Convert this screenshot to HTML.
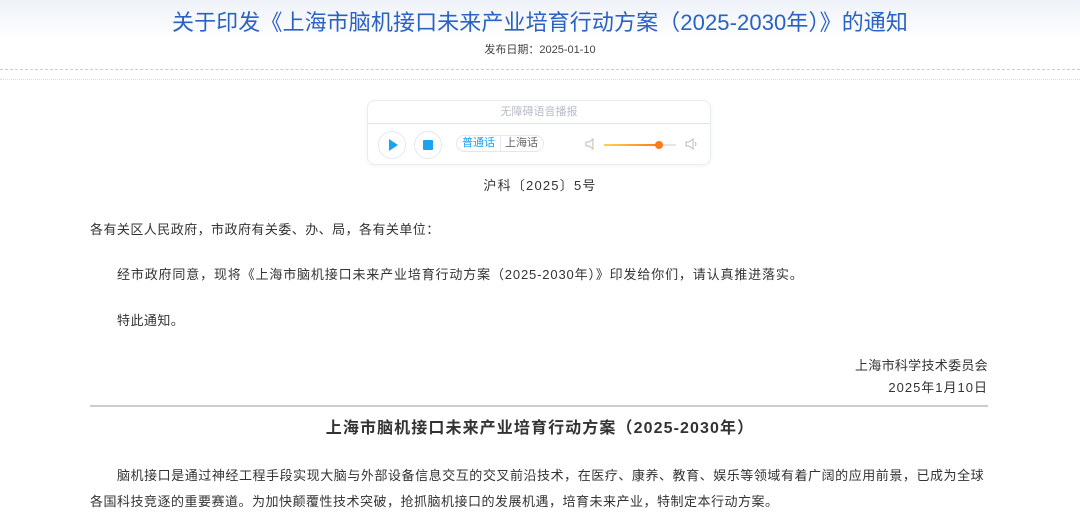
<!DOCTYPE html>
<html><head><meta charset="utf-8"><style>
*{margin:0;padding:0;box-sizing:border-box}
body{width:1080px;height:522px;overflow:hidden;background:#fff;font-family:"Liberation Sans","Noto Sans CJK SC",sans-serif;color:#333;position:relative}
.top{position:absolute;left:0;top:0;width:1080px;height:68px;background:linear-gradient(#eef2f8,#fff 60%)}
.t{position:absolute;left:0;width:1080px;text-align:center;top:8px;font-size:22px;color:#2a62c4;line-height:30px;letter-spacing:0.1px}
.d{position:absolute;left:0;width:1080px;text-align:center;top:41px;font-size:11px;color:#444}
.l1{position:absolute;left:0;width:1080px;top:69px;border-top:1px dashed #ccc}
.l2{position:absolute;left:0;width:1080px;top:79px;border-top:1px dotted #ddd}
.p{position:absolute;font-size:13px;line-height:18px;white-space:nowrap;letter-spacing:0.45px}
.box{position:absolute;left:367px;top:100px;width:344px;height:65px;border:1px solid #e8ecf3;border-radius:8px;box-shadow:0 1px 4px rgba(0,0,0,.05)}
.hd{height:23px;border-bottom:1px solid #dde6f3;text-align:center;font-size:11px;color:#b8bcc8;line-height:23px}
.c{position:absolute;width:28px;height:28px;border:1px solid #e3e8f0;border-radius:50%;top:30px}
.tog{position:absolute;left:88px;top:34px;width:88px;height:17px;border:1px solid #e3e8f0;border-radius:9px;font-size:11px;line-height:15px}
</style></head><body>
<div class="top"></div>
<div class="t">关于印发《上海市脑机接口未来产业培育行动方案（2025-2030年）》的通知</div>
<div class="d">发布日期：2025-01-10</div>
<div class="l1"></div><div class="l2"></div>
<div class="box"><div class="hd">无障碍语音播报</div>
<div class="c" style="left:10px"><svg width="28" height="28" style="position:absolute;left:-1px;top:-1px"><path d="M11 8 L20 14 L11 20Z" fill="#1aa3f0"/></svg></div>
<div class="c" style="left:46px"><div style="position:absolute;left:8px;top:8px;width:10px;height:10px;background:#1aa3f0;border-radius:1px"></div></div>
<div class="tog"><span style="position:absolute;left:5px;color:#1aa3f0">普通话</span><span style="position:absolute;left:43px;top:0;height:15px;border-left:1px solid #e3e8f0"></span><span style="position:absolute;left:48px;color:#666">上海话</span></div>
<svg style="position:absolute;left:216px;top:36px" width="12" height="14"><path d="M2 5h3l4-3v10l-4-3H2z" fill="none" stroke="#bbb"/></svg>
<div style="position:absolute;left:236px;top:43px;width:72px;height:2px;background:#e5e5e5"></div>
<div style="position:absolute;left:236px;top:43px;width:56px;height:2px;background:linear-gradient(90deg,#ffd34d,#ff7a1a)"></div>
<div style="position:absolute;left:287px;top:40px;width:8px;height:8px;border-radius:50%;background:#ff7a1a"></div>
<svg style="position:absolute;left:316px;top:36px" width="16" height="14"><path d="M2 5h3l4-3v10l-4-3H2z M11 5q2 2 0 4" fill="none" stroke="#bbb"/></svg>
</div>
<div class="p" style="left:0;width:1080px;text-align:center;top:177px;letter-spacing:1.2px">沪科〔2025〕5号</div>
<div class="p" style="left:90px;top:221px">各有关区人民政府，市政府有关委、办、局，各有关单位：</div>
<div class="p" style="left:117px;top:266px;letter-spacing:0.85px">经市政府同意，现将《上海市脑机接口未来产业培育行动方案（2025-2030年）》印发给你们，请认真推进落实。</div>
<div class="p" style="left:117px;top:312px">特此通知。</div>
<div class="p" style="right:92px;top:357px;letter-spacing:0.3px">上海市科学技术委员会</div>
<div class="p" style="right:92px;top:379px;letter-spacing:1px">2025年1月10日</div>
<div style="position:absolute;left:90px;top:405px;width:898px;border-top:2px solid #ccc"></div>
<div class="p" style="left:0;width:1080px;text-align:center;top:418px;font-size:16px;font-weight:bold;line-height:22px;letter-spacing:1.1px">上海市脑机接口未来产业培育行动方案（2025-2030年）</div>
<div class="p" style="left:117px;top:467px;letter-spacing:0.55px">脑机接口是通过神经工程手段实现大脑与外部设备信息交互的交叉前沿技术，在医疗、康养、教育、娱乐等领域有着广阔的应用前景，已成为全球</div>
<div class="p" style="left:90px;top:493px;letter-spacing:0.5px">各国科技竞逐的重要赛道。为加快颠覆性技术突破，抢抓脑机接口的发展机遇，培育未来产业，特制定本行动方案。</div>
</body></html>
